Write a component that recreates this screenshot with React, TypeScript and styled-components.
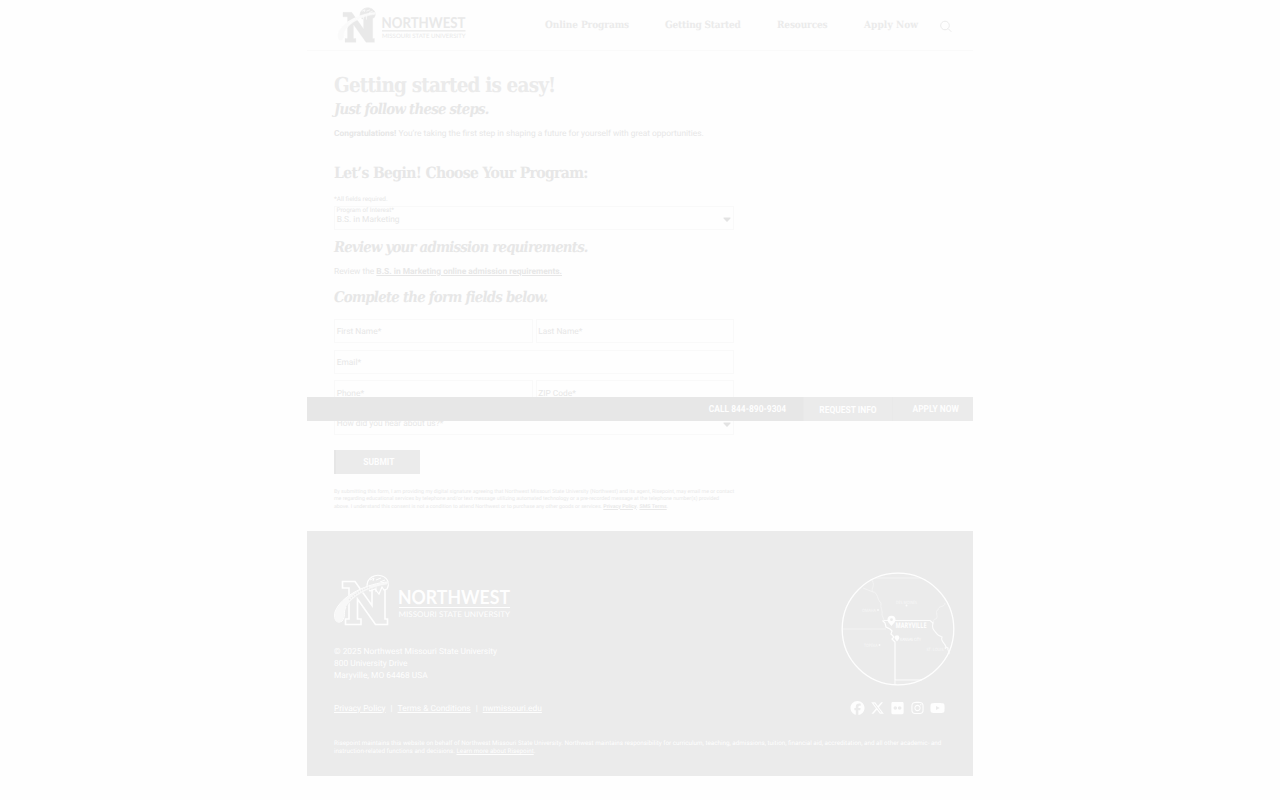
import React from "react";
import styled, { createGlobalStyle } from "styled-components";
import { FaFacebook, FaXTwitter, FaFlickr, FaInstagram, FaYoutube } from "react-icons/fa6";

const slab = `"DejaVu Serif Condensed", "DejaVu Serif", serif`;

const GlobalStyle = createGlobalStyle`
  body { margin: 0; background: #fefefe; font-family: Roboto, "Liberation Sans", sans-serif; }
  * { box-sizing: border-box; }
  h1, h2, p { margin: 0; }
`;

const Page = styled.div`
  position: relative;
  width: 666px;
  height: 800px;
  margin: 0 auto;
  color: #e7e7e7;
  font-size: 8.4px;
  text-rendering: geometricPrecision;
`;

const Header = styled.header`
  display: flex;
  align-items: flex-start;
  height: 51px;
  border-bottom: 1px solid #fafafa;
  padding: 7px 21px 0 29px;
`;

const Nav = styled.nav`
  display: flex;
  align-items: center;
  height: 37px;
  margin-left: auto;
`;

const NavItem = styled.a<{ $w: number; $gap: number; $ls: number }>`
  width: ${(p) => p.$w}px;
  margin-right: ${(p) => p.$gap}px;
  letter-spacing: ${(p) => p.$ls}px;
  font: bold 10px/12px ${slab};
  color: #ebebeb;
  white-space: nowrap;
`;

const Main = styled.main`
  display: flex;
  flex-direction: column;
  height: 480px;
  padding: 22px 27px 0;
`;

const Title = styled.h1<{ $size: number; $ls?: number; $top?: number; $italic?: boolean; $color?: string }>`
  height: 24px;
  margin-top: ${(p) => p.$top ?? 0}px;
  font: ${(p) => (p.$italic ? "italic" : "normal")} bold ${(p) => p.$size}px/${(p) => (p.$italic ? 26 : 24)}px ${slab};
  letter-spacing: ${(p) => p.$ls ?? 0}px;
  color: ${(p) => p.$color ?? "#e7e7e7"};
  white-space: nowrap;
`;

const Line = styled.p<{ $top: number; $size?: number }>`
  height: 10px;
  margin-top: ${(p) => p.$top}px;
  font-size: ${(p) => p.$size ?? 8.4}px;
  line-height: ${(p) => (p.$size ? 11 : 13)}px;
  white-space: nowrap;
`;

const Link = styled.a`
  font-weight: bold;
  text-decoration: underline;
`;

const Row = styled.div<{ $top: number }>`
  display: grid;
  grid-auto-flow: column;
  grid-auto-columns: 1fr;
  gap: 3px;
  width: 400px;
  margin-top: ${(p) => p.$top}px;
`;

const Field = styled.div<{ $down?: number }>`
  display: flex;
  align-items: center;
  justify-content: space-between;
  height: 24px;
  border: 1px solid #f9f9f9;
  padding: ${(p) => p.$down ?? 2}px 2px 0 1px;
`;

const FieldText = styled.div`
  display: flex;
  flex-direction: column;
`;

const FieldLabel = styled.span`
  font-size: 6.35px;
  line-height: 7px;
  margin-top: -5px;
  padding-left: 0.5px;
`;

const FieldValue = styled.span`
  line-height: 12px;
  padding-left: 0.7px;
`;

const Submit = styled.button`
  display: flex;
  justify-content: center;
  align-items: center;
  flex: none;
  width: 86px;
  height: 24px;
  margin-top: 15px;
  border: 0;
  border-left: 2px solid #e6e6e6;
  padding: 0 0 0 2px;
  background: #ebebeb;
`;

const Condensed = styled.span`
  display: inline-block;
  font: bold 9.7px/12px Roboto, sans-serif;
  color: #fefefe;
  white-space: nowrap;
  transform: scaleX(0.87);
`;

const Legal = styled.p`
  margin-top: 14.5px;
  font-size: 5.28px;
  line-height: 7.5px;
  color: #e9e9e9;
  white-space: nowrap;
`;

const StickyBar = styled.div`
  position: absolute;
  left: 0;
  top: 397px;
  width: 666px;
  height: 24px;
  display: flex;
  justify-content: flex-end;
  background: #e7e7e7;
`;

const BarCell = styled.div<{ $w: number; $tint?: boolean; $down?: number; $shift?: number }>`
  display: flex;
  align-items: center;
  justify-content: center;
  width: ${(p) => p.$w}px;
  padding-top: ${(p) => p.$down ?? 1}px;
  padding-left: ${(p) => p.$shift ?? 0}px;
  background: ${(p) => (p.$tint ? "#ebebeb" : "transparent")};
  & + & { border-left: 1px solid #e9e9e9; }
`;

const Footer = styled.footer`
  display: flex;
  flex-direction: column;
  height: 245px;
  padding: 41px 18px 0 27px;
  background: #ebebeb;
  color: #fefefe;
`;

const FooterTop = styled.div`
  display: flex;
  justify-content: space-between;
  height: 122px;
`;

const FooterBrand = styled.div`
  padding-top: 1.5px;
`;

const Address = styled.address`
  margin-top: 20.5px;
  font-style: normal;
  line-height: 12px;
`;

const FooterMid = styled.div`
  display: flex;
  align-items: center;
  justify-content: space-between;
  height: 28px;
  padding-right: 10px;
`;

const FooterLinks = styled.div`
  display: flex;
  gap: 5px;
  padding-top: 1px;
  a { text-decoration: underline; }
`;

const Social = styled.div`
  display: flex;
  gap: 5px;
  svg { width: 15px; height: 14px; }
`;

const Note = styled.p`
  margin-top: 17px;
  font-size: 6.31px;
  line-height: 8px;
  white-space: nowrap;
  a { text-decoration: underline; }
`;

const LogoSvg = styled.svg`
  display: block;
  overflow: visible;
`;

const N_PATH = "M8.5 7.5H21L38 31.5V14H34V7.5H53V14H51V45H53.5V50.5H41.5L23.500 25V45H27V50.5H11.5V45H15V14H8.5Z";

function Emblem({ ink, ground, outlined }: { ink: string; ground: string; outlined?: boolean }) {
  return (
    <g>
      <path d={N_PATH} fill={outlined ? ground : ink} stroke={ink} strokeWidth={outlined ? 1.6 : 0.4} />
      <path d="M33 12C33 4 41-0.500 48 2C54 4 56 10 53 15L50 16L48 13L45 20L41 15L36 17Z" fill={outlined ? ground : ink} stroke={ink} strokeWidth="1.2" />
      <path d="M36 6L40 4L39 7M42 6L47 4M46 8L51 6M38 13V17M42 12V18" stroke={outlined ? ink : ground} strokeWidth="1" fill="none" />
      <path d="M54 8C35 9 7 21 1 38C-1 47 4 50 8 47C12 43 9 38 12 33C19 22 35 13 54 10.500Z" fill={outlined ? "#f8f8f8" : "#fafafa"} stroke={ground} strokeWidth=".6" />
      {outlined && <path d="M1 38C7 21 35 9 54 8M1 38C-1 47 4 50 8 47C12 43 9 38 12 33" stroke={ink} strokeWidth="1" fill="none" />}
      <path d="M15 26C22 19 29 15 36 13" stroke={ground} strokeWidth="1.4" strokeDasharray="1.5 1" fill="none" />
    </g>
  );
}

function HeaderLogo() {
  const ink = "#e9e9e9";
  return (
    <LogoSvg width="132" height="37" viewBox="0 0 132 37">
      <g transform="translate(1 0) scale(.7)"><Emblem ink={ink} ground="#fefefe" /></g>
      <text x="45.500" y="21" fontFamily="Lato" fontWeight="700" fontSize="15" textLength="84" lengthAdjust="spacingAndGlyphs" fill={ink}>NORTHWEST</text>
      <path d="M46 23.900H129.500" stroke={ink} strokeWidth="1.100" />
      <text x="46" y="31" fontFamily="Lato" fontSize="6" textLength="83.500" lengthAdjust="spacingAndGlyphs" fill={ink}>MISSOURI STATE UNIVERSITY</text>
    </LogoSvg>
  );
}

function FooterLogo() {
  const ink = "#fefefe";
  return (
    <LogoSvg width="180" height="52" viewBox="0 0 180 52">
      <Emblem ink={ink} ground="#ebebeb" outlined />
      <text x="64" y="29.500" fontFamily="Lato" fontWeight="700" fontSize="19.5" textLength="112" lengthAdjust="spacingAndGlyphs" fill={ink}>NORTHWEST</text>
      <path d="M65 33.500H176" stroke={ink} strokeWidth="1.2" />
      <text x="64.500" y="42.500" fontFamily="Lato" fontSize="7.8" textLength="111.500" lengthAdjust="spacingAndGlyphs" fill={ink}>MISSOURI STATE UNIVERSITY</text>
    </LogoSvg>
  );
}

function Caret() {
  return (
    <svg width="8" height="6" viewBox="0 0 8 6">
      <path d="M0.7 1.5H7.3Q7.8 2 7.3 2.6L4.6 5.5Q4 6 3.4 5.5L0.7 2.6Q.2 2 .7 1.5Z" fill="#e3e3e3" />
    </svg>
  );
}

function RegionMap() {
  const faint = { fontFamily: "Open Sans", fontSize: 4.4, fill: "#f8f8f8" };
  return (
    <svg width="114" height="114" viewBox="0 0 114 114" fill="none">
      <g stroke="#f5f5f5" strokeWidth="0.8">
        <path d="M34 6H80M2 57H45M31 8C35 15 29 16 32 20C37 20 36 28 40 31C39 36 42 39 41 43L43 48M22 16L32 20M104 31C104 36 97 33 97 38C93 39 98 44 95 47C91 47 94 51 91 52" />
      </g>
      <path d="M54 113V108M54 108H81" stroke="#fcfcfc" strokeWidth="1" />
      <path d="M42.5 48.500H89L92 51C90 57 94 59 97 63L101 65C99 69 104 71 105 75L107 76C106 79 109 79 108 82" stroke="#fcfcfc" strokeWidth="1.1" />
      <path d="M41.500 48.500L44 51L45 55L49 57L51 59L50 62L53 65L51 67L54 70V108" stroke="#fefefe" strokeWidth="1.2" />
      <circle cx="57" cy="57" r="55.8" stroke="#fefefe" strokeWidth="1.3" />
      <path d="M50.500 54C47.500 50.500 46.500 49.500 46.500 47.800A4 4 0 0 1 54.500 47.800C54.500 49.500 53.500 50.500 50.500 54Z" fill="#fefefe" />
      <circle cx="50.500" cy="47.700" r="1.4" fill="#ebebeb" />
      <path d="M56 69.500C54 67 53.700 66.500 53.700 65.500A2.300 2.300 0 0 1 58.300 65.500C58.300 66.500 58 67 56 69.500Z" fill="#fefefe" />
      <text x="54.500" y="56" fontFamily="Open Sans" fontWeight="700" fontSize="7.6" textLength="31" lengthAdjust="spacingAndGlyphs" fill="#fefefe">MARYVILLE</text>
      <text x="59" y="68.500" {...faint} fill="#fefefe" textLength="21" lengthAdjust="spacingAndGlyphs">KANSAS CITY</text>
      <text x="55" y="31.500" {...faint} textLength="21" lengthAdjust="spacingAndGlyphs">DES MOINES</text>
      <text x="21" y="40" {...faint} textLength="14" lengthAdjust="spacingAndGlyphs">OMAHA</text>
      <text x="23" y="75" {...faint} textLength="13.500" lengthAdjust="spacingAndGlyphs">TOPEKA</text>
      <text x="85.500" y="79" {...faint} textLength="17" lengthAdjust="spacingAndGlyphs">ST. LOUIS</text>
      <g fill="#fafafa">
        <circle cx="65.500" cy="33.500" r=".9" /><circle cx="37" cy="38" r=".9" /><circle cx="38.500" cy="73" r=".9" /><circle cx="104.500" cy="76" r=".9" />
      </g>
    </svg>
  );
}

function SearchIcon() {
  return (
    <svg width="12" height="14" viewBox="0 0 12 14" fill="none" stroke="#e9e9e9" strokeWidth="0.9">
      <circle cx="5" cy="6.500" r="4.300" />
      <path d="M8.100 9.600L11.300 12.800" />
    </svg>
  );
}

export default function App() {
  return (
    <>
      <GlobalStyle />
      <Page>
        <Header>
          <HeaderLogo />
          <Nav>
            <NavItem $w={84} $gap={36} $ls={-0.1}>Online Programs</NavItem>
            <NavItem $w={76} $gap={36} $ls={-0.2}>Getting Started</NavItem>
            <NavItem $w={50} $gap={37} $ls={-0.15}>Resources</NavItem>
            <NavItem $w={55} $gap={21} $ls={0.1}>Apply Now</NavItem>
            <SearchIcon />
          </Nav>
        </Header>
        <Main>
          <Title $size={20.5} $ls={-0.82} $color="#ebebeb">Getting started is easy!</Title>
          <Title as="h2" $size={14.8} $ls={-0.74} $italic>Just follow these steps.</Title>
          <Line $top={7}><b>Congratulations!</b> You’re taking the first step in shaping a future for yourself with great opportunities.</Line>
          <Title as="h2" $size={15.5} $ls={-0.62} $top={23}>Let’s Begin! Choose Your Program:</Title>
          <Line $top={9} $size={6.4}>*All fields required.</Line>
          <Row $top={2}>
            <Field $down={1}>
              <FieldText>
                <FieldLabel>Program of Interest*</FieldLabel>
                <FieldValue>B.S. in Marketing</FieldValue>
              </FieldText>
              <Caret />
            </Field>
          </Row>
          <Title as="h2" $size={14.8} $ls={-0.77} $top={5} $italic>Review your admission requirements.</Title>
          <Line $top={7}>Review the <Link>B.S. in Marketing online admission requirements.</Link></Line>
          <Title as="h2" $size={14.8} $ls={-0.75} $top={9} $italic>Complete the form fields below.</Title>
          <Row $top={10}>
            <Field><FieldValue>First Name*</FieldValue></Field>
            <Field><FieldValue>Last Name*</FieldValue></Field>
          </Row>
          <Row $top={7}><Field><FieldValue>Email*</FieldValue></Field></Row>
          <Row $top={6}>
            <Field $down={3}><FieldValue>Phone*</FieldValue></Field>
            <Field $down={3}><FieldValue>ZIP Code*</FieldValue></Field>
          </Row>
          <Row $top={7}><Field $down={2}><FieldValue>How did you hear about us?*</FieldValue><Caret /></Field></Row>
          <Submit><Condensed>SUBMIT</Condensed></Submit>
          <Legal>
            By submitting this form, I am providing my digital signature agreeing that Northwest Missouri State University (Northwest) and its agent, Risepoint, may email me or contact<br />
            me regarding educational services by telephone and/or text message utilizing automated technology or a pre-recorded message at the telephone number(s) provided<br />
            above. I understand this consent is not a condition to attend Northwest or to purchase any other goods or services. <Link>Privacy Policy</Link>. <Link>SMS Terms</Link>.
          </Legal>
        </Main>
        <Footer>
          <FooterTop>
            <FooterBrand>
              <FooterLogo />
              <Address>
                © 2025 Northwest Missouri State University<br />
                800 University Drive<br />
                Maryville, MO 64468 USA
              </Address>
            </FooterBrand>
            <RegionMap />
          </FooterTop>
          <FooterMid>
            <FooterLinks>
              <a>Privacy Policy</a><span>|</span><a>Terms &amp; Conditions</a><span>|</span><a>nwmissouri.edu</a>
            </FooterLinks>
            <Social><FaFacebook /><FaXTwitter /><FaFlickr /><FaInstagram /><FaYoutube /></Social>
          </FooterMid>
          <Note>
            Risepoint maintains this website on behalf of Northwest Missouri State University. Northwest maintains responsibility for curriculum, teaching, admissions, tuition, financial aid, accreditation, and all other academic- and<br />
            instruction-related functions and decisions. <a>Learn more about Risepoint</a>.
          </Note>
        </Footer>
        <StickyBar>
          <BarCell $w={112}><Condensed>CALL 844-890-9304</Condensed></BarCell>
          <BarCell $w={89} $tint $down={3}><Condensed>REQUEST INFO</Condensed></BarCell>
          <BarCell $w={81} $tint $shift={6}><Condensed>APPLY NOW</Condensed></BarCell>
        </StickyBar>
      </Page>
    </>
  );
}
